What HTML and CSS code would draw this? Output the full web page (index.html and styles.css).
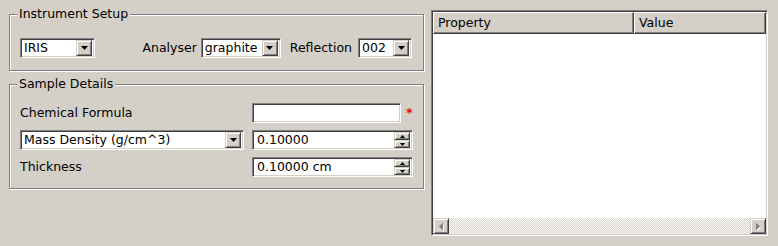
FILE: index.html
```html
<!DOCTYPE html>
<html>
<head>
<meta charset="utf-8">
<link rel="stylesheet" href="styles.css">
</head>
<body>
<div class="app">
  <div class="left">
    <fieldset class="group g1">
      <legend>Instrument Setup</legend>
      <div class="row1">
        <div class="combo w-iris"><span class="val">IRIS</span><span class="drop"><svg width="7" height="4" viewBox="0 0 7 4"><path d="M0 0h7L3.5 4z" fill="#000"/></svg></span></div>
        <span class="lbl push">Analyser</span>
        <div class="combo w-analyser"><span class="val">graphite</span><span class="drop"><svg width="7" height="4" viewBox="0 0 7 4"><path d="M0 0h7L3.5 4z" fill="#000"/></svg></span></div>
        <span class="lbl gap-l">Reflection</span>
        <div class="combo w-refl"><span class="val">002</span><span class="drop"><svg width="7" height="4" viewBox="0 0 7 4"><path d="M0 0h7L3.5 4z" fill="#000"/></svg></span></div>
      </div>
    </fieldset>
    <fieldset class="group g2">
      <legend>Sample Details</legend>
      <div class="form">
        <span class="lbl">Chemical Formula</span>
        <div class="fieldcell"><div class="field w-formula"></div><span class="req">*</span></div>
        <div class="combo"><span class="val">Mass Density (g/cm^3)</span><span class="drop"><svg width="7" height="4" viewBox="0 0 7 4"><path d="M0 0h7L3.5 4z" fill="#000"/></svg></span></div>
        <div class="field spin"><span class="val">0.10000</span><span class="spinbtns"><span class="sb"><svg width="5" height="3" viewBox="0 0 5 3"><path d="M2.5 0L5 3H0z" fill="#000"/></svg></span><span class="sb"><svg width="5" height="3" viewBox="0 0 5 3"><path d="M0 0h5L2.5 3z" fill="#000"/></svg></span></span></div>
        <span class="lbl">Thickness</span>
        <div class="field spin"><span class="val">0.10000 cm</span><span class="spinbtns"><span class="sb"><svg width="5" height="3" viewBox="0 0 5 3"><path d="M2.5 0L5 3H0z" fill="#000"/></svg></span><span class="sb"><svg width="5" height="3" viewBox="0 0 5 3"><path d="M0 0h5L2.5 3z" fill="#000"/></svg></span></span></div>
      </div>
    </fieldset>
  </div>
  <div class="table">
    <div class="thead">
      <div class="th th1">Property</div>
      <div class="th th2">Value</div>
    </div>
    <div class="tbody"></div>
    <div class="hscroll">
      <div class="sbtn"><svg width="6" height="9" viewBox="0 0 6 9"><path d="M5 0.5v8L1 4.5z" fill="#fff" transform="translate(1 1)"/><path d="M5 0.5v8L1 4.5z" fill="#808080"/></svg></div>
      <div class="track"></div>
      <div class="sbtn"><svg width="6" height="9" viewBox="0 0 6 9"><path d="M1 0.5v8L5 4.5z" fill="#fff" transform="translate(1 1)"/><path d="M1 0.5v8L5 4.5z" fill="#808080"/></svg></div>
    </div>
  </div>
</div>
</body>
</html>
```

FILE: styles.css
```css
* { box-sizing: border-box; }
html, body { margin: 0; padding: 0; }
body {
  background: #d4d0c8;
  font-family: "DejaVu Sans", sans-serif;
  font-size: 12.5px;
  color: #000;
  width: 778px;
  height: 246px;
  overflow: hidden;
}
.app {
  display: flex;
  align-items: flex-start;
  padding: 7px 0 0 9px;
  gap: 7px;
}
.left { width: 415px; display: flex; flex-direction: column; }
.group {
  margin: 0;
  min-width: 0;
  border: 1px solid #808080;
  box-shadow: 1px 1px 0 #fff, inset 1px 1px 0 #fff;
  padding: 0 11px 0 10px;
}
.group legend {
  padding: 0 2px;
  margin-left: -3px;
  line-height: 14px;
  background: #d4d0c8;
}
.g1 { padding-top: 17px; padding-bottom: 12px; }
.g2 { margin-top: 6px; padding-top: 12px; padding-bottom: 11px; }

.row1 { display: flex; align-items: center; height: 20px; }
.lbl { white-space: nowrap; line-height: 20px; }
.push { margin-left: auto; margin-right: 4px; }
.gap-l { margin-left: 9px; margin-right: 6px; }

.combo, .field {
  position: relative;
  height: 20px;
  background: #fff;
  border: 1px solid;
  border-color: #808080 #fff #fff #808080;
  box-shadow: inset 1px 1px 0 #404040, inset -1px -1px 0 #d4d0c8;
  display: flex;
  align-items: center;
  padding: 0 2px 0 3px;
}
.combo .val, .field .val { flex: 1; white-space: nowrap; overflow: hidden; line-height: 16px; }
.w-iris { width: 75px; }
.w-analyser { width: 80px; }
.w-refl { width: 54px; }
.w-formula { width: 149px; }

.drop {
  width: 16px;
  height: 16px;
  background: #d4d0c8;
  border: 1px solid;
  border-color: #d4d0c8 #404040 #404040 #d4d0c8;
  box-shadow: inset 1px 1px 0 #fff, inset -1px -1px 0 #808080;
  display: flex;
  align-items: center;
  justify-content: center;
}
.drop svg { display: block; }

.form {
  display: grid;
  grid-template-columns: 224px 161px;
  column-gap: 8px;
  row-gap: 7px;
  align-items: center;
}
.fieldcell { display: flex; align-items: center; }
.req {
  color: #ff0000;
  margin-left: 5px;
  font-size: 13px;
  font-weight: bold;
  line-height: 12px;
}
.spin .val { padding-left: 1px; }
.spinbtns {
  display: flex;
  flex-direction: column;
  width: 16px;
  height: 16px;
}
.sb {
  flex: 1;
  background: #d4d0c8;
  border: 1px solid;
  border-color: #d4d0c8 #404040 #404040 #d4d0c8;
  box-shadow: inset 1px 1px 0 #fff, inset -1px -1px 0 #808080;
  display: flex;
  align-items: center;
  justify-content: center;
}
.sb svg { display: block; }

.table {
  margin-top: 3px;
  width: 337px;
  height: 226px;
  border: 1px solid;
  border-color: #808080 #fff #fff #808080;
  box-shadow: inset 1px 1px 0 #404040, inset -1px -1px 0 #d4d0c8;
  padding: 1px;
  display: flex;
  flex-direction: column;
  background: #fff;
}
.thead { display: flex; height: 22px; flex: none; }
.th {
  height: 22px;
  background: #d4d0c8;
  border: 1px solid;
  border-color: #fff #404040 #404040 #fff;
  box-shadow: inset -1px -1px 0 #808080;
  padding-left: 4px;
  line-height: 20px;
  white-space: nowrap;
}
.th1 { width: 201px; }
.th2 { flex: 1; }
.tbody { flex: 1; background: #fff; }
.hscroll { display: flex; height: 16px; flex: none; }
.sbtn {
  width: 16px;
  height: 16px;
  background: #d4d0c8;
  border: 1px solid;
  border-color: #d4d0c8 #404040 #404040 #d4d0c8;
  box-shadow: inset 1px 1px 0 #fff, inset -1px -1px 0 #808080;
  display: flex;
  align-items: center;
  justify-content: center;
}
.track {
  flex: 1;
  background: repeating-conic-gradient(#fff 0 25%, #d4d0c8 0 50%) 0 0 / 2px 2px;
}
```
